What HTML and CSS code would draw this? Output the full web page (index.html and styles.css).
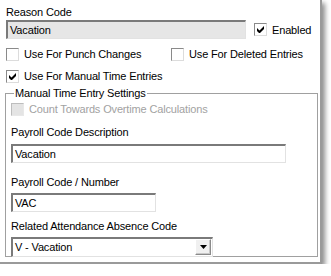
FILE: index.html
```html
<!DOCTYPE html>
<html lang="en">
<head>
    <meta charset="UTF-8">
    <title>Reason Code</title>
    <link rel="stylesheet" href="styles.css">
</head>
<body>
    <div class="panel">
        <div class="label">Reason Code</div>
        <div class="row first">
            <div class="field readonly wide">Vacation</div>
            <label class="check enabled-check"><span class="box"><svg width="7" height="7" viewBox="0 0 7 7"><path d="M0 2v3l2 2h1l4-4V0L2.5 4.5z" fill="#000"/></svg></span>Enabled</label>
        </div>

        <div class="row checks">
            <label class="check punch"><span class="box"></span>Use For Punch Changes</label>
            <label class="check"><span class="box"></span>Use For Deleted Entries</label>
        </div>
        <div class="row checks">
            <label class="check"><span class="box"><svg width="7" height="7" viewBox="0 0 7 7"><path d="M0 2v3l2 2h1l4-4V0L2.5 4.5z" fill="#000"/></svg></span>Use For Manual Time Entries</label>
        </div>

        <fieldset class="group">
            <legend>Manual Time Entry Settings</legend>
            <label class="check disabled"><span class="box"></span>Count Towards Overtime Calculations</label>

            <div class="label desc-label">Payroll Code Description</div>
            <div class="field desc">Vacation</div>

            <div class="label code-label">Payroll Code / Number</div>
            <div class="field code">VAC</div>

            <div class="label absence-label">Related Attendance Absence Code</div>
            <div class="field select">
                <span class="value">V - Vacation</span>
                <span class="drop"><svg width="7" height="4" viewBox="0 0 7 4"><path d="M0 0h7L3.5 4z" fill="#000"/></svg></span>
            </div>
        </fieldset>
    </div>
</body>
</html>
```

FILE: styles.css
```css
*{
    margin: 0;
    padding: 0;
    box-sizing: border-box;
}

body{
    background: #fff;
    font-family: "Liberation Sans", Arial, sans-serif;
    font-size: 11px;
    letter-spacing: -0.15px;
    color: #000;
}

.panel{
    width: 322px;
    height: 264px;
    background: #fff;
    border-right: 2px solid #9a9a9a;
    border-bottom: 2px solid #9a9a9a;
    box-shadow: 3px 3px 5px rgba(0,0,0,0.45);
    padding: 6px 0 0 6px;
}

.label{
    line-height: 13px;
    height: 13px;
}

.row{
    display: flex;
    align-items: center;
}

.row.first{
    margin-top: 1px;
}

.field{
    height: 19px;
    line-height: 16px;
    padding-left: 2px;
    border-top: 2px solid #7a7a7a;
    border-left: 2px solid #7a7a7a;
    border-right: 1px solid #e2e2e2;
    border-bottom: 1px solid #e2e2e2;
    background: #fff;
    white-space: nowrap;
}

.field.readonly{
    background: #e6e6e6;
}

.wide{
    width: 240px;
}

.check{
    display: flex;
    align-items: center;
    line-height: 14px;
    white-space: nowrap;
}

.box{
    width: 13px;
    height: 13px;
    margin-right: 5px;
    display: flex;
    align-items: center;
    justify-content: center;
    border-top: 1px solid #8a8a8a;
    border-left: 1px solid #8a8a8a;
    border-right: 1px solid #dcdcdc;
    border-bottom: 1px solid #dcdcdc;
    background: #fff;
}

.enabled-check{
    margin-left: 8px;
}

.checks{
    margin-top: 8px;
}

.checks + .checks{
    margin-top: 8px;
}

.punch{
    width: 165px;
}

.group{
    width: 313px;
    height: 171px;
    margin: 3px 0 0 -1px;
    border: 1px solid #a0a0a0;
    padding: 2px 0 0 5px;
}

.group legend{
    margin-left: 3px;
    padding: 0 1px;
    line-height: 14px;
}

.disabled{
    color: #a2a2a2;
}

.disabled .box{
    background: #e4e4e4;
    border-color: #bdbdbd #e8e8e8 #e8e8e8 #bdbdbd;
}

.desc-label{
    margin-top: 10px;
}

.code-label{
    margin-top: 13px;
}

.absence-label{
    margin-top: 8px;
}

.desc{
    width: 275px;
    margin-top: 5px;
}

.code{
    width: 145px;
    margin-top: 4px;
}

.select{
    width: 202px;
    height: 20px;
    margin-top: 4px;
    display: flex;
    justify-content: space-between;
    padding-right: 1px;
}

.drop{
    width: 16px;
    height: 16px;
    display: flex;
    align-items: center;
    justify-content: center;
    background: #f0f0f0;
    border: 1px solid #8a8a8a;
    border-top-color: #fff;
    border-left-color: #fff;
    box-shadow: inset -1px -1px 0 #c8c8c8;
}
```
